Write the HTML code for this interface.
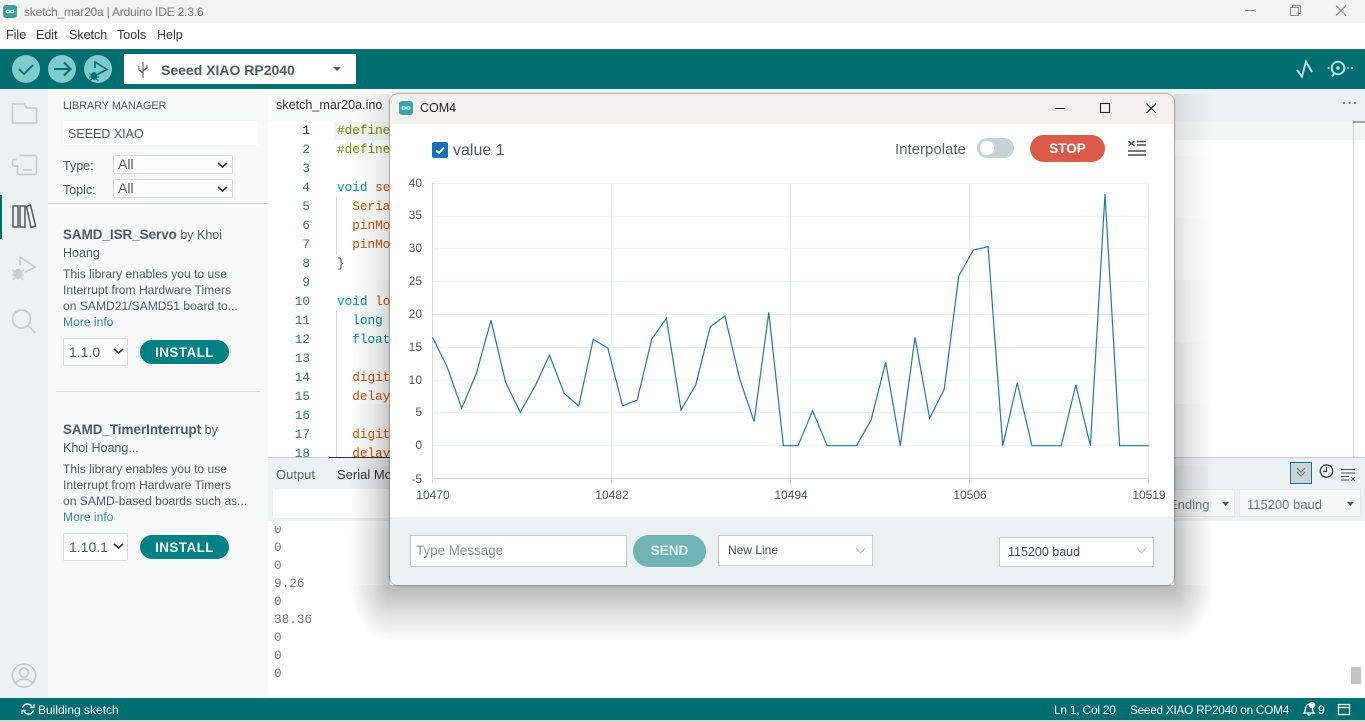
<!DOCTYPE html>
<html><head><meta charset="utf-8"><title>sketch_mar20a | Arduino IDE 2.3.6</title>
<style>
html,body{margin:0;padding:0;width:1365px;height:722px;overflow:hidden;background:#fff}
body{position:relative;font-family:"Liberation Sans",sans-serif;color:#4e5b61}
.a{position:absolute}
.t{position:absolute;white-space:nowrap;line-height:18px}
.ln{position:absolute;width:40px;left:270px;text-align:right;color:#2f7486;font-family:"Liberation Mono",monospace;font-size:12.7px;line-height:19px}
.c{position:absolute;white-space:pre;font-family:"Liberation Mono",monospace;font-size:12.7px;line-height:19px;left:337px}
.sel{position:absolute;background:#fff;border:1px solid #d6dadb;border-radius:2px;box-sizing:border-box;font-size:14px;color:#4e5b61}
.btn{position:absolute;background:#008184;color:#fff;border-radius:13px;font-weight:bold;font-size:13.5px;text-align:center;letter-spacing:.4px}
.out{position:absolute;left:6px;font-family:"Liberation Mono",monospace;font-size:12.7px;color:#787878;line-height:18px}
.sr,.sl{position:absolute;width:40px;height:62px}
.sr{left:1174px}
.sl{left:350px}
</style></head>
<body>
<!-- title bar -->
<div class="a" style="left:0;top:0;width:1365px;height:23px;background:#f3f3f3"></div>
<div class="a" style="left:3px;top:5px;width:14px;height:13px;background:#3c9fa3;border-radius:3px"></div>
<svg class="a" style="left:3px;top:5px" width="14" height="13" fill="none" stroke="#fff" stroke-width="1"><path d="M7 6.5C6 4.8 3.2 4.8 3.2 6.5S6 8.2 7 6.5C8 4.8 10.8 4.8 10.8 6.5S8 8.2 7 6.5Z"/></svg>
<div class="t" style="left:24px;top:3px;font-size:12px;letter-spacing:-.2px;color:#777">sketch_mar20a | Arduino IDE 2.3.6</div>
<svg class="a" style="left:1240px;top:0" width="125" height="23" fill="none" stroke="#8a8a8a" stroke-width="1"><path d="M5 10.5H15"/><rect x="50.5" y="7.5" width="8" height="8"/><path d="M52.5 7.5V5.5H60.5V13.5H58.5"/><path d="M96 5.5L106 15.5M106 5.5L96 15.5"/></svg>
<!-- menu -->
<div class="t" style="left:6px;top:26px;font-size:12.5px;color:#333">File</div>
<div class="t" style="left:36px;top:26px;font-size:12.5px;color:#333">Edit</div>
<div class="t" style="left:69px;top:26px;font-size:12.5px;color:#333">Sketch</div>
<div class="t" style="left:117px;top:26px;font-size:12.5px;color:#333">Tools</div>
<div class="t" style="left:157px;top:26px;font-size:12.5px;color:#333">Help</div>
<!-- toolbar -->
<div class="a" style="left:0;top:49px;width:1365px;height:40px;background:#006d70"></div>
<svg class="a" style="left:0;top:49px" width="120" height="40">
<circle cx="26" cy="20" r="14" fill="#7fcbcd"/><path d="M19 20l5 5 9-9" fill="none" stroke="#006d70" stroke-width="1.8"/>
<circle cx="62" cy="20" r="14" fill="#7fcbcd"/><path d="M54 20H70M64 13.5L70.5 20L64 26.5" fill="none" stroke="#006d70" stroke-width="2"/>
<circle cx="98" cy="20" r="14" fill="#7fcbcd"/><path d="M95 19V13L107 20.5L98 25" fill="none" stroke="#006d70" stroke-width="1.6"/>
<ellipse cx="94" cy="27" rx="3.4" ry="3.8" fill="#006d70"/><path d="M89 24.5L92 26M89 28h10M89.5 31.5L92 30M99 24.5L96 26M98.5 31.5L96 30" fill="none" stroke="#006d70" stroke-width="1.1"/>
</svg>
<div class="a" style="left:124px;top:54px;width:232px;height:30px;background:#fff"></div>
<svg class="a" style="left:136px;top:61px" width="14" height="18" fill="none" stroke="#4e5b61" stroke-width="1.1"><path d="M7 1V17M3 5V9L7 12M11 4V7L7 10"/></svg>
<div class="t" style="left:161px;top:61px;font-size:14px;font-weight:bold;color:#4e5b61">Seeed XIAO RP2040</div>
<svg class="a" style="left:333px;top:67px" width="9" height="5"><path d="M0 0H8L4 4Z" fill="#4e5b61"/></svg>
<svg class="a" style="left:1290px;top:55px" width="70" height="28" fill="none" stroke="#b5e0e1" stroke-width="2"><path d="M7 15L12 21.5L16 6.5L22 17" /><circle cx="48" cy="13" r="6.3"/><circle cx="48" cy="13" r="1.8" fill="#b5e0e1" stroke="none"/><path d="M44.5 18L42 21.5"/><circle cx="38.5" cy="13" r="1" fill="#b5e0e1" stroke="none"/><circle cx="58" cy="13" r="1" fill="#b5e0e1" stroke="none"/><circle cx="62" cy="13" r="1" fill="#b5e0e1" stroke="none"/></svg>
<!-- sidebar -->
<div class="a" style="left:0;top:89px;width:48px;height:609px;background:#ecf1f1"></div>
<div class="a" style="left:48px;top:89px;width:220px;height:609px;background:#f7f9f9"></div>
<div class="a" style="left:0;top:195px;width:2px;height:44px;background:#006d70"></div>
<svg class="a" style="left:0;top:89px" width="48" height="250" fill="none" stroke="#c8cdce" stroke-width="1.7">
<path d="M12.5 15H24L27 19H36.5V34H12.5Z"/>
<path d="M19 66.5H35A1.5 1.5 0 0 1 36.5 68V84A1.5 1.5 0 0 1 35 85.5H19A1.5 1.5 0 0 1 17.5 84V77H14A1.5 1.5 0 0 1 12.5 75.5V72A1.5 1.5 0 0 1 14 70.5H17.5"/><path d="M23 81H32"/>
<path d="M13 117H18V138H13ZM20 117H25V138H20ZM26.5 117.5L30.5 116L35.5 137L31 138.5Z" stroke="#55595a" stroke-width="1.5"/>
<path d="M20 176V168L35 178L25 183"/>
<ellipse cx="18" cy="185" rx="4.5" ry="5" fill="#c8cdce" stroke="none"/><path d="M12 181L15 183M12 186H24M12.5 191L15 189M24 181L21 183M23.5 191L21 189" stroke-width="1.2"/>
<circle cx="21.5" cy="230" r="9"/><path d="M28.5 237L35.5 244"/>
</svg>
<svg class="a" style="left:10px;top:662px" width="28" height="28" fill="none" stroke="#c4cacb" stroke-width="1.6"><circle cx="14" cy="13.5" r="11.5"/><circle cx="14" cy="10.5" r="4.5"/><path d="M6 21C8 16 20 16 22 21"/></svg>
<!-- library panel -->
<div class="t" style="left:63px;top:97px;font-size:10.8px;color:#4e5b61">LIBRARY MANAGER</div>
<div class="a" style="left:63px;top:121px;width:195px;height:24px;background:#fff"></div>
<div class="t" style="left:68px;top:125px;font-size:12.5px">SEEED XIAO</div>
<div class="t" style="left:63px;top:157px;font-size:12.5px">Type:</div>
<div class="sel" style="left:113px;top:155px;width:120px;height:19px;line-height:17px;padding-left:4px">All</div>
<div class="t" style="left:63px;top:181px;font-size:12.5px">Topic:</div>
<div class="sel" style="left:113px;top:179px;width:120px;height:19px;line-height:17px;padding-left:4px">All</div>
<svg class="a" style="left:217px;top:161px" width="12" height="32" fill="none" stroke="#333" stroke-width="1.6"><path d="M1 2L5.5 6L10 2M1 26L5.5 30L10 26"/></svg>
<div class="a" style="left:48px;top:203px;width:220px;height:1px;background:#d3d7d8"></div>

<div class="t" style="left:63px;top:226px;font-size:12.5px"><b style="font-size:13.4px">SAMD_ISR_Servo</b> by Khoi</div>
<div class="t" style="left:63px;top:244px;font-size:12.5px">Hoang</div>
<div class="t" style="left:63px;top:266px;font-size:12.1px;line-height:16px;white-space:pre">This library enables you to use
Interrupt from Hardware Timers
on SAMD21/SAMD51 board to...
<span style="color:#3b8a8f">More info</span></div>
<div class="sel" style="left:63px;top:338px;width:65px;height:28px;line-height:26px;padding-left:5px">1.1.0</div>
<div class="btn" style="left:140px;top:340px;width:89px;height:24px;line-height:25px">INSTALL</div>
<div class="a" style="left:56px;top:391px;width:204px;height:1px;background:#d3d7d8"></div>

<div class="t" style="left:63px;top:421px;font-size:12.5px"><b style="font-size:13.4px">SAMD_TimerInterrupt</b> by</div>
<div class="t" style="left:63px;top:439px;font-size:12.5px">Khoi Hoang...</div>
<div class="t" style="left:63px;top:461px;font-size:12.1px;line-height:16px;white-space:pre">This library enables you to use
Interrupt from Hardware Timers
on SAMD-based boards such as...
<span style="color:#3b8a8f">More info</span></div>
<div class="sel" style="left:63px;top:533px;width:65px;height:28px;line-height:26px;padding-left:5px">1.10.1</div>
<div class="btn" style="left:140px;top:535px;width:89px;height:24px;line-height:25px">INSTALL</div>
<svg class="a" style="left:113px;top:346px" width="12" height="205" fill="none" stroke="#333" stroke-width="1.6"><path d="M1 3L5.5 7L10 3M1 198L5.5 202L10 198"/></svg>

<!-- editor -->
<div class="a" style="left:268px;top:89px;width:1097px;height:33px;background:#ecf1f1"></div>
<div class="a" style="left:268px;top:89px;width:125px;height:33px;background:#fafbfb"></div>
<div class="a" style="left:334px;top:122px;width:1031px;height:18px;background:#f3f5f5"></div>
<div class="t" style="left:276px;top:96px;font-size:12.6px;color:#333">sketch_mar20a.ino</div>
<svg class="a" style="left:1340px;top:100px" width="18" height="6" fill="#6a7478"><circle cx="4" cy="3" r="1"/><circle cx="9.5" cy="3" r="1"/><circle cx="15" cy="3" r="1"/></svg>
<div class="a" style="left:1353px;top:121px;width:1px;height:336px;background:#d0d3d4"></div>
<div class="a" style="left:1353px;top:121px;width:12px;height:2px;background:#a0a4a5"></div>
<div class="a" style="left:268px;top:122px;width:1085px;height:335px;overflow:hidden">
<div style="position:absolute;left:-268px;top:-122px;width:1300px;height:500px">
<div class="ln" style="top:121px;color:#22226e">1</div><div class="ln" style="top:140px">2</div><div class="ln" style="top:159px">3</div><div class="ln" style="top:178px">4</div><div class="ln" style="top:197px">5</div><div class="ln" style="top:216px">6</div><div class="ln" style="top:235px">7</div><div class="ln" style="top:254px">8</div><div class="ln" style="top:273px">9</div><div class="ln" style="top:292px">10</div><div class="ln" style="top:311px">11</div><div class="ln" style="top:330px">12</div><div class="ln" style="top:349px">13</div><div class="ln" style="top:368px">14</div><div class="ln" style="top:387px">15</div><div class="ln" style="top:406px">16</div><div class="ln" style="top:425px">17</div><div class="ln" style="top:444px">18</div>
<div class="c" style="top:121px;color:#728e00">#define</div>
<div class="c" style="top:140px;color:#728e00">#define</div>
<div class="c" style="top:178px;color:#00979d">void <span style="color:#d35400">setup</span></div>
<div class="c" style="top:197px;color:#d35400">  Serial</div>
<div class="c" style="top:216px;color:#d35400">  pinMode</div>
<div class="c" style="top:235px;color:#d35400">  pinMode</div>
<div class="c" style="top:254px;color:#434f54">}</div>
<div class="c" style="top:292px;color:#00979d">void <span style="color:#d35400">loop</span></div>
<div class="c" style="top:311px;color:#00979d">  long</div>
<div class="c" style="top:330px;color:#00979d">  float</div>
<div class="c" style="top:368px;color:#d35400">  digital</div>
<div class="c" style="top:387px;color:#d35400">  delay</div>
<div class="c" style="top:425px;color:#d35400">  digital</div>
<div class="c" style="top:444px;color:#d35400">  delay</div>
<div class="a" style="left:336px;top:197px;width:1px;height:57px;background:#d5d8d9"></div>
<div class="a" style="left:336px;top:311px;width:1px;height:146px;background:#d5d8d9"></div>
</div></div>
<!-- output header -->
<div class="a" style="left:268px;top:457px;width:1097px;height:1px;background:#c9cdce"></div>
<div class="a" style="left:329px;top:457px;width:70px;height:1px;background:#333"></div>
<div class="a" style="left:268px;top:458px;width:1097px;height:33px;background:#ecf1f1"></div>
<div class="a" style="left:268px;top:491px;width:1097px;height:30px;background:#ecf1f1"></div>
<div class="t" style="left:276px;top:466px;font-size:13px;color:#5f6b70">Output</div>
<div class="t" style="left:337px;top:466px;font-size:13px;color:#333">Serial Monitor</div>
<div class="a" style="left:273px;top:489px;width:930px;height:29px;background:#fff"></div>
<div class="a" style="left:1140px;top:489px;width:95px;height:28px;box-sizing:border-box;background:#f5f7f7;border:1px solid #e2e7e8"></div>
<div class="t" style="left:1169px;top:496px;font-size:13px;color:#6f7b80">Ending</div>
<svg class="a" style="left:1222px;top:502px" width="8" height="5"><path d="M0 0H7L3.5 4Z" fill="#4e5b61"/></svg>
<div class="a" style="left:1239px;top:489px;width:122px;height:28px;box-sizing:border-box;background:#f5f7f7;border:1px solid #e2e7e8"></div>
<div class="t" style="left:1247px;top:496px;font-size:13px;color:#6f7b80">115200 baud</div>
<svg class="a" style="left:1347px;top:502px" width="8" height="5"><path d="M0 0H7L3.5 4Z" fill="#4e5b61"/></svg>
<div class="a" style="left:1290px;top:462px;width:22px;height:22px;box-sizing:border-box;background:#c9d6d8;border:1px solid #1f6c9a"></div>
<svg class="a" style="left:1290px;top:462px" width="70" height="24" fill="none" stroke="#6b777b" stroke-width="1.2"><path d="M7 6L11 10L15 6M7 10L11 14L15 10"/><circle cx="36.5" cy="9" r="6.2" stroke="#3f4a4e" stroke-width="1.4"/><path d="M36.5 5V9.5H33" stroke="#3f4a4e"/><path d="M51 7.5H65M51 11H65M51 14.5H59M51 18H59" stroke="#555" stroke-width="1"/><path d="M61 15L65 19M65 15L61 19" stroke="#555" stroke-width="1"/></svg>
<!-- output -->
<div class="a" style="left:268px;top:526px;width:200px;height:172px;overflow:hidden">
<div class="out" style="top:-5px">0</div><div class="out" style="top:13px">0</div><div class="out" style="top:31px">0</div><div class="out" style="top:49px">9.26</div><div class="out" style="top:67px">0</div><div class="out" style="top:85px">38.36</div><div class="out" style="top:103px">0</div><div class="out" style="top:121px">0</div><div class="out" style="top:139px">0</div>
</div>
<div class="a" style="left:1351px;top:667px;width:10px;height:17px;background:#c4c4c4"></div>
<!-- status -->
<div class="a" style="left:0;top:698px;width:1365px;height:22px;background:#006d70"></div>
<div class="a" style="left:0;top:720px;width:1365px;height:2px;background:#d5d5d5"></div>
<svg class="a" style="left:20px;top:702px" width="16" height="14" fill="none" stroke="#fff" stroke-width="1.5"><path d="M2.5 6A5 5 0 0 1 12 5M13.5 8A5 5 0 0 1 4 9"/><path d="M10 5.5H14V2M6 8.5H2V12" stroke-width="1.2"/></svg>
<div class="t" style="left:38px;top:701px;font-size:12px;color:#fff">Building sketch</div>
<div class="t" style="left:1054px;top:701px;font-size:12px;letter-spacing:-.25px;color:#fff">Ln 1, Col 20</div>
<div class="t" style="left:1130px;top:701px;font-size:11.8px;letter-spacing:-.25px;color:#fff">Seeed XIAO RP2040 on COM4</div>
<svg class="a" style="left:1302px;top:701px" width="60" height="16" fill="none" stroke="#fff" stroke-width="1.3"><path d="M2 12C4 10 3 6 5 4C6 3 8 3 9 4C11 6 10 10 12 12ZM5.5 12.5C6 14.5 8 14.5 8.5 12.5"/><circle cx="10" cy="4" r="2.5" fill="#fff"/><rect x="36.5" y="3.5" width="11" height="10"/><path d="M36.5 6.5H47.5"/></svg>
<div class="t" style="left:1318px;top:701px;font-size:12.2px;color:#fff">9</div>

<!-- window shadow, drawn with explicit gradients -->
<div class="sr" style="top:94px;background:linear-gradient(to right,rgba(0,0,0,.1),rgba(0,0,0,.042) 40%,rgba(0,0,0,0))"></div>
<div class="sr" style="top:156px;background:linear-gradient(to right,rgba(0,0,0,.12),rgba(0,0,0,.05) 40%,rgba(0,0,0,0))"></div>
<div class="sr" style="top:218px;background:linear-gradient(to right,rgba(0,0,0,.14),rgba(0,0,0,.059) 40%,rgba(0,0,0,0))"></div>
<div class="sr" style="top:280px;background:linear-gradient(to right,rgba(0,0,0,.17),rgba(0,0,0,.071) 40%,rgba(0,0,0,0))"></div>
<div class="sr" style="top:342px;background:linear-gradient(to right,rgba(0,0,0,.2),rgba(0,0,0,.084) 40%,rgba(0,0,0,0))"></div>
<div class="sr" style="top:404px;background:linear-gradient(to right,rgba(0,0,0,.23),rgba(0,0,0,.097) 40%,rgba(0,0,0,0))"></div>
<div class="sr" style="top:466px;background:linear-gradient(to right,rgba(0,0,0,.26),rgba(0,0,0,.11) 40%,rgba(0,0,0,0))"></div>
<div class="sr" style="top:528px;height:57px;background:linear-gradient(to right,rgba(0,0,0,.28),rgba(0,0,0,.12) 40%,rgba(0,0,0,0))"></div>
<div class="sl" style="top:94px;background:linear-gradient(to left,rgba(0,0,0,.1),rgba(0,0,0,.042) 40%,rgba(0,0,0,0))"></div>
<div class="sl" style="top:156px;background:linear-gradient(to left,rgba(0,0,0,.12),rgba(0,0,0,.05) 40%,rgba(0,0,0,0))"></div>
<div class="sl" style="top:218px;background:linear-gradient(to left,rgba(0,0,0,.14),rgba(0,0,0,.059) 40%,rgba(0,0,0,0))"></div>
<div class="sl" style="top:280px;background:linear-gradient(to left,rgba(0,0,0,.17),rgba(0,0,0,.071) 40%,rgba(0,0,0,0))"></div>
<div class="sl" style="top:342px;background:linear-gradient(to left,rgba(0,0,0,.2),rgba(0,0,0,.084) 40%,rgba(0,0,0,0))"></div>
<div class="sl" style="top:404px;background:linear-gradient(to left,rgba(0,0,0,.23),rgba(0,0,0,.097) 40%,rgba(0,0,0,0))"></div>
<div class="sl" style="top:466px;background:linear-gradient(to left,rgba(0,0,0,.26),rgba(0,0,0,.11) 40%,rgba(0,0,0,0))"></div>
<div class="sl" style="top:528px;height:57px;background:linear-gradient(to left,rgba(0,0,0,.28),rgba(0,0,0,.12) 40%,rgba(0,0,0,0))"></div>
<div class="a" style="left:390px;top:585px;width:784px;height:58px;background:linear-gradient(to bottom,rgba(0,0,0,.28),rgba(0,0,0,.12) 50%,rgba(0,0,0,0))"></div>
<div class="a" style="left:350px;top:585px;width:40px;height:58px;background:radial-gradient(ellipse 40px 58px at 100% 0,rgba(0,0,0,.28),rgba(0,0,0,.12) 50%,rgba(0,0,0,0))"></div>
<div class="a" style="left:1174px;top:585px;width:40px;height:58px;background:radial-gradient(ellipse 40px 58px at 0 0,rgba(0,0,0,.28),rgba(0,0,0,.12) 50%,rgba(0,0,0,0))"></div>

<!-- plotter window -->
<div class="a" style="left:390px;top:94px;width:784px;height:491px;border-radius:8px;background:#fff;box-shadow:0 0 1px 1px rgba(90,90,90,.45);overflow:hidden">
<div class="a" style="left:0;top:0;width:784px;height:30px;background:#f5f0ee"></div>
<div class="a" style="left:0;top:423px;width:784px;height:68px;background:#ebf0f0"></div>
<div class="a" style="left:9px;top:7px;width:14px;height:14px;border-radius:3px;background:#3ba4a6"></div>
<svg class="a" style="left:9px;top:7px" width="14" height="14" fill="none" stroke="#d5f0f0" stroke-width="1"><path d="M7 7C6 5.3 3 5.3 3 7S6 8.7 7 7C8 5.3 11 5.3 11 7S8 8.7 7 7Z"/></svg>
<div class="t" style="left:30px;top:5px;font-size:12.5px;color:#222">COM4</div>
<svg class="a" style="left:660px;top:3px" width="120" height="24" fill="none" stroke="#222" stroke-width="1.1"><path d="M5 11.5H15"/><rect x="50.5" y="6.5" width="9" height="9"/><path d="M96.5 6.5L106 16M106 6.5L96.5 16"/></svg>
<div class="a" style="left:42px;top:48px;width:16px;height:16px;border-radius:2px;background:#1173b3"></div>
<svg class="a" style="left:42px;top:48px" width="16" height="16" fill="none" stroke="#fff" stroke-width="2"><path d="M4 8.5L7 11L12 5.5"/></svg>
<div class="t" style="left:63px;top:48px;font-size:16px;color:#4e5b61">value 1</div>
<div class="t" style="left:505px;top:47px;font-size:15px;color:#5a666b">Interpolate</div>
<div class="a" style="left:587px;top:44px;width:37px;height:20px;border-radius:10px;background:#c8d2d2"></div>
<div class="a" style="left:590px;top:47px;width:14px;height:14px;border-radius:7px;background:#fff"></div>
<div class="a" style="left:640px;top:41px;width:75px;height:27px;border-radius:14px;background:#da5b4a;color:#fff;font-weight:bold;font-size:13.5px;line-height:27px;text-align:center">STOP</div>
<svg class="a" style="left:736px;top:44px" width="22" height="22" fill="none" stroke="#434f54" stroke-width="1.4"><path d="M2.5 3L8.5 8M8.5 3L2.5 8M11 3.5H20M11 7H20M2 13H20M2 17H20"/></svg>
<!-- chart -->
<svg class="a" style="left:-390px;top:-94px" width="1174" height="600">
<g fill="none" stroke="#ebefef" stroke-width="1">
<path d="M432 183.5H1148.5M432 216.3H1148.5M432 248.8H1148.5M432 281.8H1148.5M432 314.5H1148.5M432 347.5H1148.5M432 380.2H1148.5M432 412.7H1148.5M432 445.7H1148.5"/>
<path d="M611.5 183V478M790.5 183V478M969.5 183V478M1148.5 183V478"/>
</g>
<path d="M432.5 183V483M432.5 478.5H1148.5M611.5 478.5V483M790.5 478.5V483M969.5 478.5V483M1148.5 478.5V483" fill="none" stroke="#d4d8d8"/>
<polyline fill="none" stroke="#2078a8" stroke-width="1.2" stroke-linejoin="miter" points="432.5,337.3 447.1,366.7 461.7,408.3 476.4,373.3 491,320.3 505.6,382.3 520.2,412.3 534.8,386.7 549.5,355 564.1,393.3 578.7,406 593.3,339.3 607.9,348.3 622.6,406 637.2,400 651.8,339 666.4,318.3 681,410 695.7,385 710.3,326.7 724.9,316 739.5,378.3 754.1,421.7 768.8,312.3 783.4,445.7 798,445.7 812.6,410.7 827.2,445.7 841.9,445.7 856.5,445.7 871.1,420 885.7,362.3 900.3,445.7 915,337.3 929.6,418.3 944.2,389.3 958.8,276 973.4,250 988.1,246.7 1002.7,445.7 1017.3,382.7 1031.9,445.7 1046.5,445.7 1061.2,445.7 1075.8,385 1090.4,445.7 1105,194 1119.6,445.7 1134.3,445.7 1148.9,445.7"/>
<g font-family="Liberation Sans, sans-serif" font-size="12" fill="#4e5b61" text-anchor="end">
<text x="422" y="187">40</text><text x="422" y="219">35</text><text x="422" y="252">30</text><text x="422" y="285">25</text><text x="422" y="318">20</text><text x="422" y="351">15</text><text x="422" y="384">10</text><text x="422" y="416">5</text><text x="422" y="449">0</text><text x="422" y="483">-5</text>
</g>
<g font-family="Liberation Sans, sans-serif" font-size="12" fill="#4e5b61" text-anchor="middle">
<text x="433" y="499">10470</text><text x="612" y="499">10482</text><text x="791" y="499">10494</text><text x="970" y="499">10506</text><text x="1149" y="499">10519</text>
</g>
</svg>
<!-- footer controls -->
<div class="a" style="left:20px;top:441px;width:217px;height:32px;box-sizing:border-box;background:#fff;border:1px solid #c5cbcc;font-size:13.4px;line-height:30px;padding-left:5px;color:#8b9396">Type Message</div>
<div class="a" style="left:243px;top:441px;width:73px;height:32px;border-radius:16px;background:#70b4b6;color:#e9f4f4;font-weight:bold;font-size:13.5px;line-height:32px;text-align:center">SEND</div>
<div class="a" style="left:328px;top:441px;width:155px;height:31px;box-sizing:border-box;background:#fff;border:1px solid #c5cbcc;font-size:12px;line-height:29px;padding-left:9px;color:#434f54">New Line</div>
<div class="a" style="left:609px;top:443px;width:155px;height:30px;box-sizing:border-box;background:#fff;border:1px solid #c5cbcc;font-size:12.5px;line-height:28px;padding-left:8px;color:#434f54">115200 baud</div>
<svg class="a" style="left:464px;top:451px" width="300" height="14" fill="none" stroke="#c0c6c7" stroke-width="1.2"><path d="M2 3L6.5 8L11 3"/><path d="M283 3L287.5 8L292 3"/></svg>
</div>
</body></html>
